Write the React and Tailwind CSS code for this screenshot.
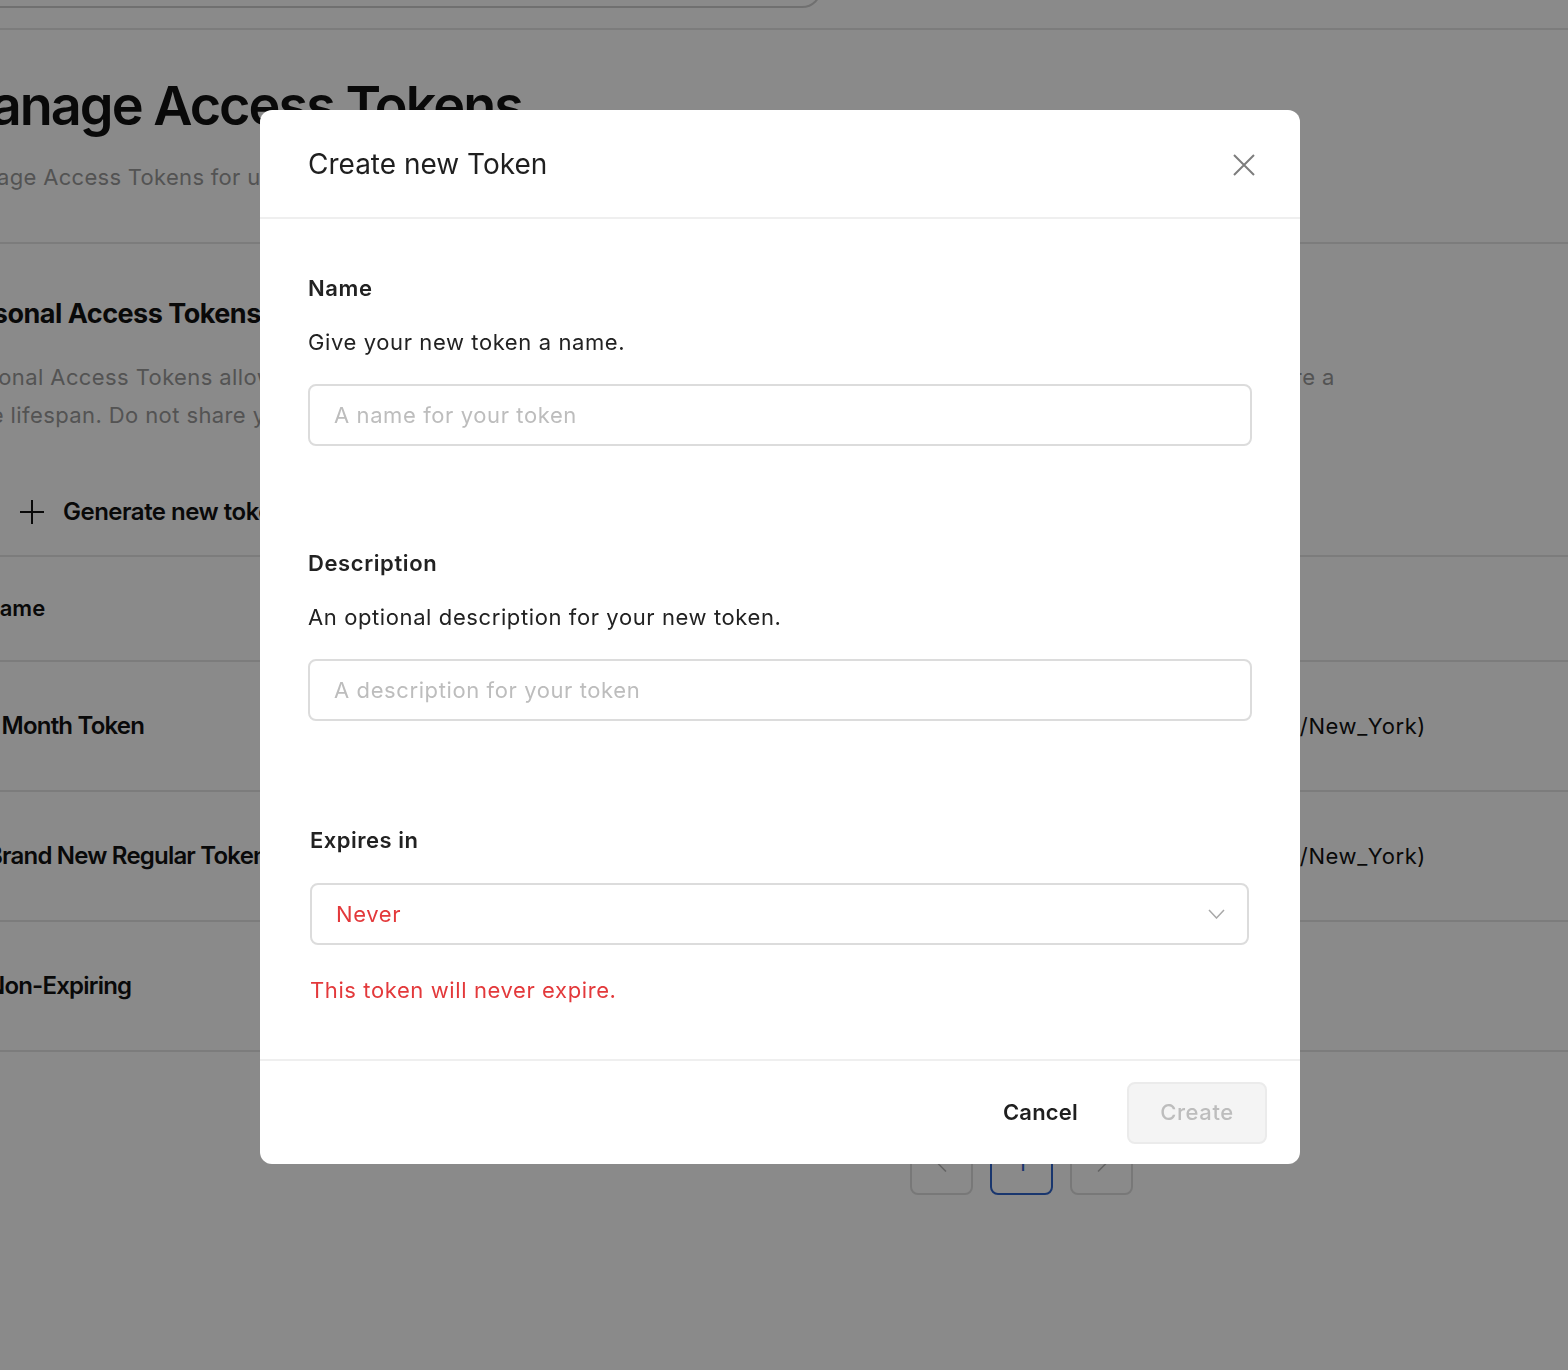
import { ChevronLeft, ChevronRight } from "lucide-react";

const tokens = [
  { name: "1 Month Token", created: "Jan 12, 2025 10:41 AM (America/New_York)" },
  { name: "Brand New Regular Token", created: "Jan 10, 2025 04:18 PM (America/New_York)" },
  { name: "Non-Expiring", created: "" },
];

const Field = ({ label, help, placeholder }) => (
  <div>
    <p className="text-[22px] font-semibold leading-[30px] tracking-[0.6px] text-[#222]">{label}</p>
    <p className="mt-6 text-[22px] leading-[30px] tracking-[0.6px] text-[#222]">{help}</p>
    <input
      placeholder={placeholder}
      className="mt-[27px] h-[62px] w-full rounded-lg border-2 border-[#dcdcdc] px-6 text-[22px] tracking-[0.6px] text-[#222] outline-none placeholder:text-[#bdbdbd]"
    />
  </div>
);

const TokensPage = () => (
  <div className="min-h-screen overflow-hidden bg-white text-[#111]">
    {/* top bar with search field */}
    <div className="flex h-[30px] items-end border-b-2 border-[#e6e6e6] pb-[20px]">
      <div className="ml-[-20px] h-[48px] w-[842px] shrink-0 rounded-[20px] border-2 border-[#cfcfcf]" />
    </div>

    <h1 className="ml-[-57px] mt-[44px] text-[54px] font-semibold leading-[64px] tracking-[-2px]">
      Manage Access Tokens
    </h1>
    <p className="ml-[-49px] mt-[24px] text-[22px] leading-[30px] tracking-[0.3px] text-[#9a9a9a]">
      Manage Access Tokens for use with the API and integrations
    </p>

    <div className="mt-[50px] border-t-2 border-[#e6e6e6]" />

    <div className="ml-[-50px]">
      <h2 className="mt-[53px] text-[27px] font-bold leading-[34px] tracking-[-0.5px]">
        Personal Access Tokens
      </h2>
      <p className="mt-[27px] whitespace-nowrap text-[22px] leading-[38px] tracking-[0.4px] text-[#9a9a9a]">
        Personal Access Tokens allow you to access the API on your own behalf. It is recommended to set an expiration date to ensure a
      </p>
      <p className="whitespace-nowrap text-[22px] leading-[38px] tracking-[0.4px] text-[#9a9a9a]">
        finite lifespan. Do not share your tokens with anyone.
      </p>
    </div>

    <button className="mt-[60px] ml-[20px] flex items-center gap-[19px] text-[24px] font-semibold tracking-[-0.5px]">
      <svg width="24" height="24" viewBox="0 0 24 24" stroke="#111" strokeWidth="2">
        <path d="M12 0v24M0 12h24" />
      </svg>
      Generate new token
    </button>

    <div className="mt-[25px] border-t-2 border-[#e6e6e6]">
      <div className="flex h-[105px] items-center border-b-2 border-[#e6e6e6]">
        <span className="ml-[-17px] text-[22px] font-semibold">Name</span>
      </div>
      {tokens.map((t) => (
        <div
          key={t.name}
          className="flex h-[130px] items-center border-b-2 border-[#e6e6e6]"
        >
          <span className="ml-[-13px] text-[24px] font-semibold tracking-[-0.8px]">{t.name}</span>
          <span className="ml-auto mr-[142px] text-[22px] tracking-[0.6px]">{t.created}</span>
        </div>
      ))}
    </div>

    <div className="mt-[80px] flex gap-[17px] pl-[910px]">
      <div className="flex h-[63px] w-[63px] items-center justify-center rounded-lg border-2 border-[#dedede] text-[#bbb]">
        <ChevronLeft size={28} strokeWidth={1.5} />
      </div>
      <div className="flex h-[63px] w-[63px] items-center justify-center rounded-lg border-2 border-[#2f64cc] text-[22px] text-[#2f64cc]">
        1
      </div>
      <div className="flex h-[63px] w-[63px] items-center justify-center rounded-lg border-2 border-[#dedede] text-[#bbb]">
        <ChevronRight size={28} strokeWidth={1.5} />
      </div>
    </div>
  </div>
);

const CreateTokenModal = () => (
  <div className="fixed inset-0 bg-black/[0.46]">
    <div className="absolute left-[260px] top-[110px] w-[1040px] overflow-hidden rounded-xl bg-white">
      <div className="flex h-[109px] items-center justify-between border-b-2 border-[#efefef] pl-12 pr-[45px]">
        <h3 className="text-[28px] leading-[36px] text-[#1f1f1f]">Create new Token</h3>
        <svg width="22" height="22" viewBox="0 0 22 22" stroke="#7d7d7d" strokeWidth="2" className="mt-[3px]">
          <path d="M1 1l20 20M21 1L1 21" />
        </svg>
      </div>

      <div className="px-12 pb-[54px] pt-[54px]">
        <Field
          label="Name"
          help="Give your new token a name."
          placeholder="A name for your token"
        />
        <div className="mt-[102px]">
          <Field
            label="Description"
            help="An optional description for your new token."
            placeholder="A description for your token"
          />
        </div>

        <div className="ml-[2px] mr-[3px] mt-[104px]">
          <p className="text-[22px] font-semibold leading-[30px] tracking-[0.5px] text-[#222]">Expires in</p>
          <div className="mt-[28px] flex h-[62px] items-center justify-between rounded-lg border-2 border-[#dcdcdc] pl-6 pr-[22px]">
            <span className="text-[22px] tracking-[0.6px] text-[#e3393b]">Never</span>
            <svg width="17" height="10" viewBox="0 0 17 10" fill="none" stroke="#a8a8a8" strokeWidth="1.5">
              <path d="M1 1l7.5 8L16 1" />
            </svg>
          </div>
          <p className="mt-[30px] text-[22px] leading-[30px] tracking-[0.6px] text-[#e3393b]">
            This token will never expire.
          </p>
        </div>
      </div>

      <div className="flex h-[105px] items-center justify-end gap-[25px] border-t-2 border-[#efefef] pr-[33px]">
        <button className="px-6 text-[22px] font-semibold tracking-[0.2px] text-[#1f1f1f]">Cancel</button>
        <button className="h-[62px] w-[140px] rounded-lg border-2 border-[#ebebeb] bg-[#f4f4f4] text-[22px] font-medium tracking-[0.6px] text-[#bdbdbd]">
          Create
        </button>
      </div>
    </div>
  </div>
);

export default function App() {
  return (
    <div className="relative font-['Inter',sans-serif]">
      <TokensPage />
      <CreateTokenModal />
    </div>
  );
}
